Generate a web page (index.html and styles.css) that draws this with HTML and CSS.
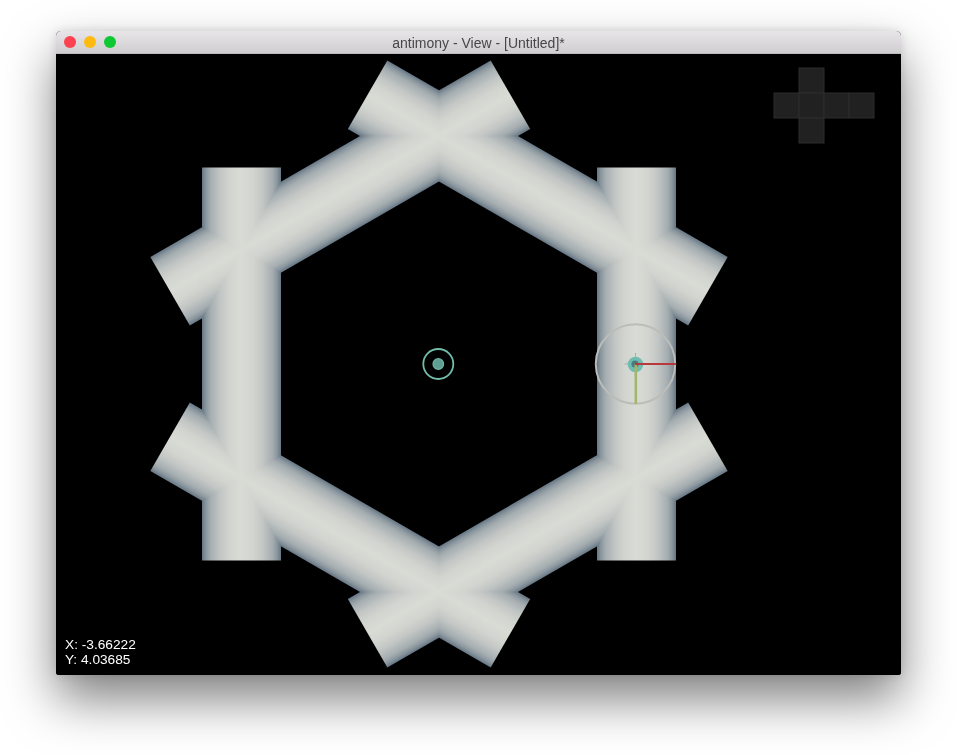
FILE: index.html
```html
<!DOCTYPE html>
<html lang="en">
<head>
  <meta charset="UTF-8">
  <title>antimony - View - [Untitled]*</title>
  <link rel="stylesheet" href="styles.css">
</head>
<body>
  <div class="window">
    <div class="titlebar">
      <div class="lights">
        <span class="light red"></span>
        <span class="light yellow"></span>
        <span class="light green"></span>
      </div>
      <div class="title">antimony - View - [Untitled]*</div>
    </div>
    <div class="viewport">
      <svg class="scene" width="845" height="621" viewBox="0 0 845 621">
        <defs>
          <linearGradient id="beam">
            <stop offset="0" stop-color="#667684"/>
            <stop offset="0.05" stop-color="#8a969e"/>
            <stop offset="0.11" stop-color="#a6aeb1"/>
            <stop offset="0.23" stop-color="#c2c6c4"/>
            <stop offset="0.35" stop-color="#d2d4cf"/>
            <stop offset="0.5" stop-color="#d9dbd5"/>
            <stop offset="0.65" stop-color="#d2d4cf"/>
            <stop offset="0.77" stop-color="#c2c6c4"/>
            <stop offset="0.89" stop-color="#a6aeb1"/>
            <stop offset="0.95" stop-color="#8a969e"/>
            <stop offset="1" stop-color="#667684"/>
          </linearGradient>
        </defs>

        <!-- six beams, brightest one wins where they cross -->
        <g transform="translate(383 310)">
          <rect class="beam" x="158" y="-196.5" width="79" height="393"/>
          <rect class="beam" x="158" y="-196.5" width="79" height="393" transform="rotate(60)"/>
          <rect class="beam" x="158" y="-196.5" width="79" height="393" transform="rotate(120)"/>
          <rect class="beam" x="158" y="-196.5" width="79" height="393" transform="rotate(180)"/>
          <rect class="beam" x="158" y="-196.5" width="79" height="393" transform="rotate(240)"/>
          <rect class="beam" x="158" y="-196.5" width="79" height="393" transform="rotate(300)"/>
        </g>

        <!-- origin node -->
        <circle class="node-ring" cx="382.3" cy="310" r="15"/>
        <circle class="node-dot" cx="382.3" cy="310" r="5.3"/>

        <!-- point gizmo -->
        <circle class="gizmo-ring" cx="579.5" cy="310" r="39.7"/>
        <path class="gizmo-tick" d="M579.5 299V321M568.5 310H590.5"/>
        <circle class="gizmo-hub" cx="579.5" cy="310.5" r="7.8"/>
        <circle class="gizmo-core" cx="579" cy="310" r="3.6"/>
        <path class="axis-y" d="M579.8 310V350"/>
        <path class="axis-x" d="M579 310H620"/>

        <!-- view cube -->
        <g class="cube">
          <rect x="743" y="14" width="25" height="25"/>
          <rect x="718" y="39" width="25" height="25"/>
          <rect x="743" y="39" width="25" height="25"/>
          <rect x="768" y="39" width="25" height="25"/>
          <rect x="793" y="39" width="25" height="25"/>
          <rect x="743" y="64" width="25" height="25"/>
        </g>
      </svg>
      <div class="coords">
        <div>X: -3.66222</div>
        <div>Y: 4.03685</div>
      </div>
    </div>
  </div>
</body>
</html>
```

FILE: styles.css
```css
html, body {
  margin: 0;
  height: 100%;
}
body {
  background: #fff;
  font-family: 'Liberation Sans', Arial, sans-serif;
  overflow: hidden;
}
.window {
  width: 845px;
  margin: 31px 0 0 56px;
  border-radius: 5px 5px 3px 3px;
  box-shadow: 0 24px 50px rgba(0,0,0,0.5), 0 0 10px rgba(0,0,0,0.12);
  background: #000;
}
.titlebar {
  height: 22px;
  display: flex;
  align-items: center;
  position: relative;
  border-radius: 5px 5px 0 0;
  background: linear-gradient(#e7e5e7, #d0ced0);
  border-bottom: 1px solid #bdbbbd;
}
.lights {
  display: flex;
  gap: 8px;
  padding-left: 8px;
}
.light {
  width: 12px;
  height: 12px;
  border-radius: 50%;
}
.red { background: #fc4150; }
.yellow { background: #fdbb10; }
.green { background: #0fc934; }
.title {
  position: absolute;
  left: 0;
  right: 0;
  top: 4px;
  text-align: center;
  font-size: 14px;
  line-height: 16px;
  color: #474648;
}
.viewport {
  position: relative;
  height: 621px;
  background: #000;
  border-radius: 0 0 3px 3px;
  overflow: hidden;
}
.scene {
  display: block;
}
.beam {
  fill: url(#beam);
  mix-blend-mode: lighten;
}
.node-ring {
  fill: none;
  stroke: #74bcaa;
  stroke-width: 1.8;
}
.node-dot {
  fill: #5f9e92;
  stroke: #6fb8a8;
  stroke-width: 1.2;
}
.gizmo-ring {
  fill: none;
  stroke: #bcbdb9;
  stroke-width: 2;
}
.gizmo-tick {
  fill: none;
  stroke: #a9adaa;
  stroke-width: 1;
}
.gizmo-hub {
  fill: #6fbdb0;
}
.gizmo-core {
  fill: #4a7a80;
}
.axis-x {
  fill: none;
  stroke: #b8383c;
  stroke-width: 2.2;
}
.axis-y {
  fill: none;
  stroke: #a3b56e;
  stroke-width: 2.6;
}
.cube rect {
  fill: #212121;
  stroke: #2c2c2c;
  stroke-width: 1;
}
.coords {
  position: absolute;
  left: 9px;
  bottom: 8px;
  font-size: 13.7px;
  line-height: 15px;
  color: #fff;
}
```
